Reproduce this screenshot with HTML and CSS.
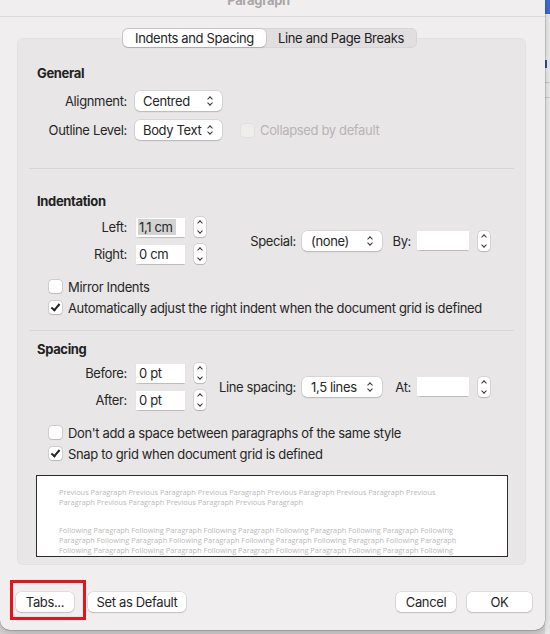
FILE: index.html
```html
<!DOCTYPE html>
<html lang="en">
<head>
  <meta charset="UTF-8" />
  <title>Paragraph</title>
  <link rel="stylesheet" href="styles.css">
</head>
<body>

  <div class="dialog">
    <div class="titlebar"><span class="title">Paragraph</span></div>

    <div class="tabs">
      <span class="tab selected">Indents and Spacing</span>
      <span class="tab">Line and Page Breaks</span>
    </div>

    <div class="panel">
      <!-- General -->
      <section class="group general">
        <h3>General</h3>
        <div class="form-grid">
          <label class="lbl">Alignment:</label>
          <div class="select w87">Centred <span class="updown"></span></div>
          <span></span>
          <label class="lbl">Outline Level:</label>
          <div class="select w87">Body Text <span class="updown"></span></div>
          <div class="check disabled"><span class="box"></span>Collapsed by default</div>
        </div>
      </section>

      <hr class="sep first">

      <!-- Indentation -->
      <section class="group">
        <h3>Indentation</h3>
        <div class="pair">
          <div class="field-grid">
            <label class="lbl">Left:</label>
            <div class="field"><span class="hl">1,1 cm</span></div>
            <span class="stepper"></span>
            <label class="lbl">Right:</label>
            <div class="field">0 cm</div>
            <span class="stepper"></span>
          </div>
          <div class="side">
            <label class="side-lbl">Special:</label>
            <div class="select w80">(none) <span class="updown"></span></div>
            <label class="by-lbl">By:</label>
            <div class="field"></div>
            <span class="stepper"></span>
          </div>
        </div>
        <div class="checks">
          <div class="check"><span class="box"></span>Mirror Indents</div>
          <div class="check"><span class="box on"></span>Automatically adjust the right indent when the document grid is defined</div>
        </div>
      </section>

      <hr class="sep second">

      <!-- Spacing -->
      <section class="group">
        <h3 class="tight">Spacing</h3>
        <div class="pair">
          <div class="field-grid">
            <label class="lbl">Before:</label>
            <div class="field">0 pt</div>
            <span class="stepper"></span>
            <label class="lbl">After:</label>
            <div class="field">0 pt</div>
            <span class="stepper"></span>
          </div>
          <div class="side">
            <label class="side-lbl">Line spacing:</label>
            <div class="select w80">1,5 lines <span class="updown"></span></div>
            <label class="by-lbl">At:</label>
            <div class="field"></div>
            <span class="stepper"></span>
          </div>
        </div>
        <div class="checks">
          <div class="check"><span class="box"></span>Don't add a space between paragraphs of the same style</div>
          <div class="check"><span class="box on"></span>Snap to grid when document grid is defined</div>
        </div>
      </section>

      <div class="preview">
        <p>
          <span>Previous Paragraph Previous Paragraph Previous Paragraph Previous Paragraph Previous Paragraph Previous</span>
          <span>Paragraph Previous Paragraph Previous Paragraph Previous Paragraph</span>
        </p>
        <p>
          <span>Following Paragraph Following Paragraph Following Paragraph Following Paragraph Following Paragraph Following</span>
          <span>Paragraph Following Paragraph Following Paragraph Following Paragraph Following Paragraph Following Paragraph</span>
          <span>Following Paragraph Following Paragraph Following Paragraph Following Paragraph Following Paragraph Following</span>
        </p>
      </div>
    </div>

    <div class="buttons">
      <div class="marked">
        <button class="btn tabs-btn">Tabs...</button>
        <span class="annotation"></span>
      </div>
      <button class="btn default-btn">Set as Default</button>
      <span class="spacer"></span>
      <button class="btn cancel-btn">Cancel</button>
      <button class="btn ok-btn">OK</button>
    </div>
  </div>

  <div class="backdrop">
    <span class="bd-blue"></span>
    <span class="bd-mark"></span>
    <span class="bd-line"></span>
    <span class="bd-line"></span>
  </div>

</body>
</html>
```

FILE: styles.css
```css
html, body {
  margin: 0;
  padding: 0;
  height: 100%;
}
body {
  display: flex;
  align-items: flex-start;
  background: #d6d4d5;
  font-family: Inter, "Liberation Sans", sans-serif;
  font-size: 13px;
  letter-spacing: -0.35px;
  color: #262626;
  overflow: hidden;
}
.dialog {
  width: 545px;
  height: 630px;
  flex: none;
  background: #f1eeef;
  border-radius: 0 0 10px 10px;
  box-shadow: 0 0 0 0.5px rgba(0, 0, 0, 0.25), 0 3px 8px rgba(0, 0, 0, 0.2);
  display: flex;
  flex-direction: column;
  position: relative;
  z-index: 1;
}
.titlebar {
  height: 16px;
  border-bottom: 1px solid #dcd9da;
  text-align: center;
  overflow: hidden;
}
.title {
  display: block;
  margin: -8px 0 0 -28px;
  font-weight: 700;
  color: #a9a6a7;
  line-height: 16px;
}

/* segmented control */
.tabs {
  align-self: center;
  margin: 11px 0 0 -6px;
  display: flex;
  background: #e1dedf;
  border-radius: 6px;
  padding: 1px;
  box-shadow: inset 0 0 0 0.5px rgba(0, 0, 0, 0.08);
  position: relative;
  z-index: 2;
}
.tab {
  height: 18px;
  line-height: 18px;
  padding: 0 12px;
  border-radius: 5px;
  color: #222;
}
.tab.selected {
  background: #fff;
  box-shadow: 0 0 0 0.5px rgba(0, 0, 0, 0.15), 0 1px 1px rgba(0, 0, 0, 0.12);
}

.panel {
  margin: -10px 19px 0 17px;
  height: 527px;
  box-sizing: border-box;
  background: #e9e6e7;
  border-radius: 6px;
  box-shadow: inset 0 0 0 0.5px rgba(0, 0, 0, 0.04);
  padding: 27px 0 6px 20px;
}
h3 {
  margin: 0;
  font-size: 13px;
  font-weight: 700;
  line-height: 16px;
  color: #222;
}
.group h3 {
  margin-bottom: 8px;
}
.group h3.tight {
  margin-bottom: 6px;
}
.general h3 {
  margin-bottom: 10px;
}
.lbl {
  text-align: right;
}

/* General rows */
.form-grid {
  display: grid;
  grid-template-columns: 90px 87px auto;
  column-gap: 8px;
  row-gap: 9px;
  align-items: center;
}
.select {
  height: 20px;
  line-height: 20px;
  box-sizing: border-box;
  background: #fff;
  border-radius: 5px;
  box-shadow: 0 0 0 0.5px rgba(0, 0, 0, 0.14), 0 1px 1.5px rgba(0, 0, 0, 0.14);
  padding: 0 0 0 8px;
  position: relative;
  white-space: nowrap;
}
.w87 { width: 87px; }
.w80 { width: 80px; padding-left: 9px; }
.updown {
  position: absolute;
  right: 8px;
  top: 5px;
  width: 7px;
  height: 10px;
}
.updown::before,
.updown::after {
  content: "";
  position: absolute;
  left: 1px;
  width: 3px;
  height: 3px;
  border-left: 1.4px solid #333;
  border-top: 1.4px solid #333;
}
.updown::before {
  top: 1px;
  transform: rotate(45deg);
}
.updown::after {
  bottom: 1px;
  transform: rotate(225deg);
}

/* checkboxes */
.check {
  display: flex;
  align-items: center;
  gap: 6px;
  height: 17px;
  white-space: nowrap;
}
.box {
  width: 13px;
  height: 13px;
  box-sizing: border-box;
  background: #fff;
  border-radius: 3px;
  box-shadow: 0 0 0 0.5px rgba(0, 0, 0, 0.2), 0 0.5px 1px rgba(0, 0, 0, 0.1);
  position: relative;
  flex: none;
}
.box.on::after {
  content: "";
  position: absolute;
  left: 4px;
  top: 1px;
  width: 3px;
  height: 7px;
  border-right: 2px solid #222;
  border-bottom: 2px solid #222;
  transform: rotate(40deg);
}
.check.disabled {
  color: #b7b4b5;
  margin-left: 11px;
}
.check.disabled .box {
  background: #efecec;
  box-shadow: 0 0 0 0.5px rgba(0, 0, 0, 0.06);
}
.checks {
  margin: 14px 0 0 12px;
  display: flex;
  flex-direction: column;
  gap: 4px;
}

/* separators */
.sep {
  border: 0;
  border-top: 1px solid #d9d6d7;
  margin: 0 12px 0 -8px;
}
.sep.first {
  margin-top: 28px;
  margin-bottom: 24px;
}
.sep.second {
  margin-top: 14px;
  margin-bottom: 10px;
}

/* text fields with steppers */
.pair {
  display: flex;
  align-items: center;
}
.field-grid {
  display: grid;
  grid-template-columns: 90px 49px 12px;
  column-gap: 9px;
  row-gap: 7px;
  align-items: center;
}
.field {
  width: 49px;
  height: 19px;
  line-height: 19px;
  box-sizing: border-box;
  background: #fff;
  box-shadow: 0 0.5px 1px rgba(0, 0, 0, 0.18);
  padding-left: 3px;
  white-space: nowrap;
}
.side .field {
  width: 52px;
}
.hl {
  background: #d3d2d3;
  padding: 0 3px 0 1px;
  margin-left: -1px;
}
.stepper {
  width: 12px;
  height: 20px;
  box-sizing: border-box;
  background: #fff;
  border-radius: 4px;
  box-shadow: 0 0 0 0.5px rgba(0, 0, 0, 0.15), 0 0.5px 1px rgba(0, 0, 0, 0.15);
  position: relative;
  flex: none;
}
.stepper::before,
.stepper::after {
  content: "";
  position: absolute;
  left: 4px;
  width: 3px;
  height: 3px;
  border-left: 1.3px solid #333;
  border-top: 1.3px solid #333;
}
.stepper::before {
  top: 4px;
  transform: rotate(45deg);
}
.stepper::after {
  bottom: 4px;
  transform: rotate(225deg);
}
.side {
  display: flex;
  align-items: center;
  margin-left: 6px;
}
.side-lbl {
  width: 84px;
  text-align: right;
  margin-right: 6px;
  white-space: nowrap;
}
.by-lbl {
  width: 25px;
  margin-left: 4px;
  margin-right: 6px;
  text-align: right;
}
.side .stepper {
  margin-left: 9px;
}

/* preview */
.preview {
  margin: 13px 18px 0 -1px;
  height: 82px;
  box-sizing: border-box;
  background: #fff;
  border: 1px solid #2c2c2c;
  padding: 11px 0 0 22px;
  font-family: "Open Sans", "Liberation Sans", sans-serif;
  font-size: 7.4px;
  letter-spacing: 0;
  line-height: 10px;
  color: #b9b9b9;
  overflow: hidden;
}
.preview p {
  margin: 0 0 18px;
}
.preview span {
  display: block;
  white-space: nowrap;
}

/* bottom buttons */
.buttons {
  display: flex;
  align-items: center;
  padding: 27px 13px 0 16px;
}
.btn {
  height: 20px;
  padding: 0;
  border: 0;
  background: #fff;
  border-radius: 5px;
  box-shadow: 0 0 0 0.5px rgba(0, 0, 0, 0.14), 0 1px 1.5px rgba(0, 0, 0, 0.14);
  font-family: inherit;
  font-size: 13px;
  letter-spacing: inherit;
  color: #262626;
}
.marked {
  position: relative;
  display: flex;
}
.tabs-btn { width: 58px; }
.default-btn { width: 98px; margin-left: 14px; }
.cancel-btn { width: 60px; }
.ok-btn { width: 65px; margin-left: 11px; }
.spacer { flex: 1; }
.annotation {
  position: absolute;
  left: -6px;
  top: -12px;
  width: 76px;
  height: 40px;
  box-sizing: border-box;
  border: 3px solid #e8121a;
  pointer-events: none;
}

/* bit of the document window behind */
.backdrop {
  flex: 1;
  height: 100%;
  display: flex;
  flex-direction: column;
  background: #ecebeb;
}
.bd-blue {
  height: 14px;
  background: #3a6fc9;
}
.bd-mark {
  height: 8px;
  margin-top: 46px;
  width: 2px;
  background: #2a57b0;
}
.bd-line {
  height: 1px;
  margin-top: 14px;
  background: #c9c8c8;
}
```
